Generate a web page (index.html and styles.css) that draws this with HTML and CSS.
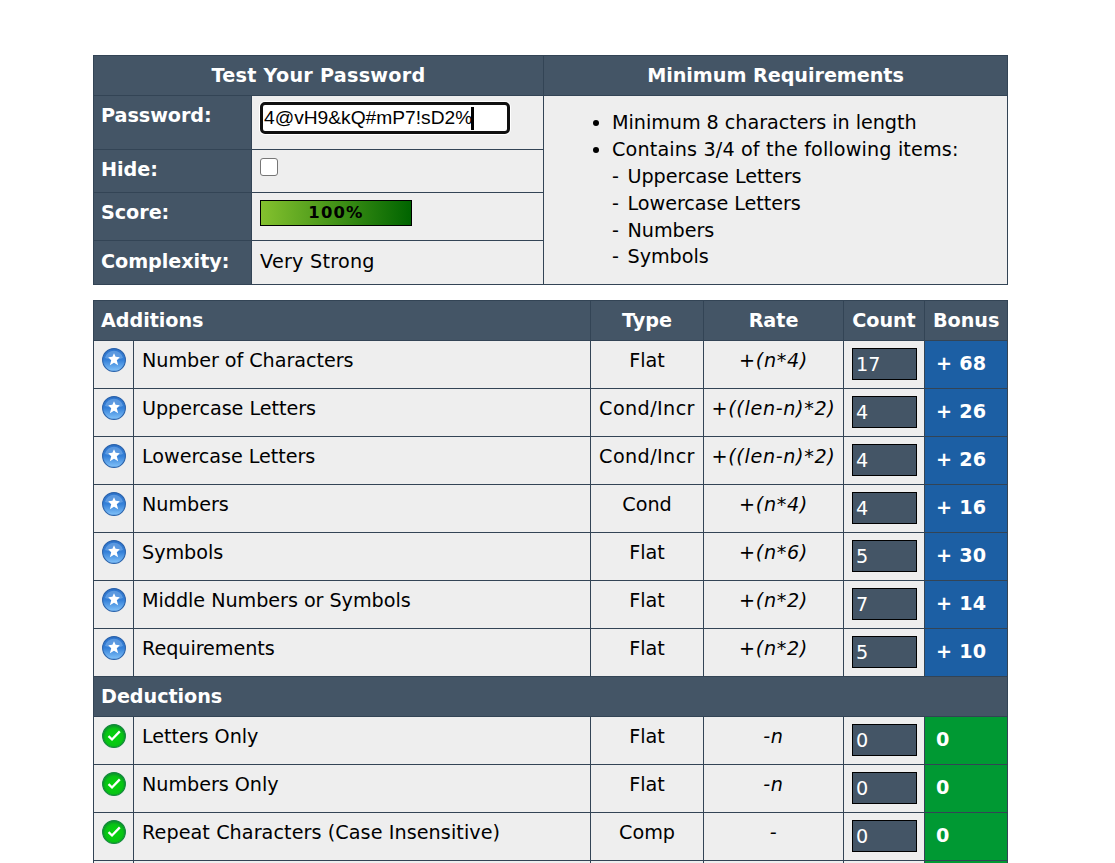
FILE: index.html
```
<!DOCTYPE html>
<html lang="en">
<head>
<meta charset="utf-8">
<title>Password Meter</title>
<link rel="stylesheet" href="styles.css">
</head>
<body>
<svg class="defs" width="0" height="0">
  <defs>
    <linearGradient id="blue" x1="0" y1="0" x2="0" y2="1"><stop offset="0" stop-color="#2e74cc"/><stop offset=".5" stop-color="#3480d8"/><stop offset="1" stop-color="#84c4fa"/></linearGradient>
    <radialGradient id="green" cx=".5" cy=".55" r=".5"><stop offset="0" stop-color="#04d60c"/><stop offset=".75" stop-color="#08c414"/><stop offset="1" stop-color="#0a9a28"/></radialGradient>
    <symbol id="star" viewBox="0 0 24 24">
      <circle cx="12" cy="12" r="11.4" fill="url(#blue)" stroke="#2a62aa" stroke-width="1.1"/>
      <path d="M3 10a9.2 9.2 0 0 1 18 0q-9 3-18 0z" fill="#9cc8f4" opacity=".4"/>
      <path d="M12 5.2l1.6 3.6 4.2.5-3 2.9 1.3 5-4.1-2.4-4.1 2.4 1.3-5-3-2.9 4.2-.5z" fill="#fff"/>
    </symbol>
    <symbol id="check" viewBox="0 0 24 24">
      <circle cx="12" cy="12" r="11.4" fill="url(#green)" stroke="#14883c" stroke-width="1.1"/>
      <path d="M6.5 12.2l3.5 3.3 7.8-8.1" fill="none" stroke="#fff" stroke-width="2.3"/>
    </symbol>
  </defs>
</svg>
<main class="page">
  <section class="test">
    <h2 class="head span2 wide">Test Your Password</h2>
    <h2 class="head">Minimum Requirements</h2>
    <label class="label">Password:</label>
    <div class="cell"><div class="field">4@vH9&amp;kQ#mP7!sD2%<span class="caret"></span></div></div>
    <div class="cell reqs">
      <ul>
        <li>Minimum 8 characters in length</li>
        <li><span class="loose">Contains 3/4 of the following items:</span><br><span class="dash">-</span>Uppercase Letters<br><span class="dash">-</span>Lowercase Letters<br><span class="dash">-</span>Numbers<br><span class="dash">-</span>Symbols</li>
      </ul>
    </div>
    <label class="label">Hide:</label>
    <div class="cell"><span class="box"></span></div>
    <label class="label">Score:</label>
    <div class="cell"><div class="score">100%</div></div>
    <label class="label low">Complexity:</label>
    <div class="cell low wide">Very Strong</div>
  </section>
  <section class="rules">
    <h2 class="head left span2">Additions</h2>
    <h2 class="head">Type</h2><h2 class="head">Rate</h2><h2 class="head">Count</h2><h2 class="head">Bonus</h2>

    <div class="cell pic"><svg class="icon"><use href="#star"/></svg></div><div class="cell">Number of Characters</div><div class="cell mid">Flat</div><div class="cell mid rate">+(n*4)</div><div class="cell pic"><div class="count">17</div></div><div class="bonus">+ 68</div>
    <div class="cell pic"><svg class="icon"><use href="#star"/></svg></div><div class="cell">Uppercase Letters</div><div class="cell mid incr">Cond/Incr</div><div class="cell mid rate">+((len-n)*2)</div><div class="cell pic"><div class="count">4</div></div><div class="bonus">+ 26</div>
    <div class="cell pic"><svg class="icon"><use href="#star"/></svg></div><div class="cell">Lowercase Letters</div><div class="cell mid incr">Cond/Incr</div><div class="cell mid rate">+((len-n)*2)</div><div class="cell pic"><div class="count">4</div></div><div class="bonus">+ 26</div>
    <div class="cell pic"><svg class="icon"><use href="#star"/></svg></div><div class="cell">Numbers</div><div class="cell mid">Cond</div><div class="cell mid rate">+(n*4)</div><div class="cell pic"><div class="count">4</div></div><div class="bonus">+ 16</div>
    <div class="cell pic"><svg class="icon"><use href="#star"/></svg></div><div class="cell">Symbols</div><div class="cell mid">Flat</div><div class="cell mid rate">+(n*6)</div><div class="cell pic"><div class="count">5</div></div><div class="bonus">+ 30</div>
    <div class="cell pic"><svg class="icon"><use href="#star"/></svg></div><div class="cell">Middle Numbers or Symbols</div><div class="cell mid">Flat</div><div class="cell mid rate">+(n*2)</div><div class="cell pic"><div class="count">7</div></div><div class="bonus">+ 14</div>
    <div class="cell pic"><svg class="icon"><use href="#star"/></svg></div><div class="cell">Requirements</div><div class="cell mid">Flat</div><div class="cell mid rate">+(n*2)</div><div class="cell pic"><div class="count">5</div></div><div class="bonus">+ 10</div>

    <h2 class="head left full">Deductions</h2>

    <div class="cell pic"><svg class="icon"><use href="#check"/></svg></div><div class="cell">Letters Only</div><div class="cell mid">Flat</div><div class="cell mid rate">-n</div><div class="cell pic"><div class="count">0</div></div><div class="bonus ok">0</div>
    <div class="cell pic"><svg class="icon"><use href="#check"/></svg></div><div class="cell">Numbers Only</div><div class="cell mid">Flat</div><div class="cell mid rate">-n</div><div class="cell pic"><div class="count">0</div></div><div class="bonus ok">0</div>
    <div class="cell pic"><svg class="icon"><use href="#check"/></svg></div><div class="cell loose">Repeat Characters (Case Insensitive)</div><div class="cell mid">Comp</div><div class="cell mid rate">-</div><div class="cell pic"><div class="count">0</div></div><div class="bonus ok">0</div>
    <div class="edge"></div><div class="edge"></div><div class="edge"></div><div class="edge"></div><div class="edge"></div><div class="edge ok"></div>
  </section>
</main>
</body>
</html>
```
FILE: styles.css
```
* { box-sizing: border-box; }
body {
  margin: 0;
  background: #fff;
  color: #000;
  font: 19.2px/24px Verdana, "DejaVu Sans", sans-serif;
  letter-spacing: -0.05px;
}
.defs { display: block; }
.page {
  width: 915px;
  margin-left: 93px;
  padding-top: 55px;
  display: flex;
  flex-direction: column;
  gap: 15px;
}
.test, .rules {
  display: grid;
  gap: 1px;
  padding: 1px;
  background: #345;
}
.test {
  grid-template-columns: 157px 291px 463px;
  grid-template-rows: 39px 53px 42px 47px 43px;
}
.rules {
  grid-template-columns: 39px 456px 112px 139px 80px 82px;
  grid-template-rows: 39px repeat(7, 47px) 39px repeat(3, 47px) 2px;
  padding-bottom: 0;
}
.head, .label {
  margin: 0;
  background: #456;
  color: #fff;
  font-size: 19.2px;
  font-weight: bold;
  padding: 8px 8px 7px;
  white-space: nowrap;
}
.label, .left { padding-left: 7px; }
.head { text-align: center; }
.head.left { text-align: left; }
.span2 { grid-column: span 2; }
.full { grid-column: 1 / -1; }
.cell {
  background: #eee;
  padding: 8px 8px 7px;
  white-space: nowrap;
  min-width: 0;
}
.test .cell, .pic { padding-top: 7px; }
.mid { text-align: center; padding-left: 0; padding-right: 0; }
.rate { font-style: italic; letter-spacing: 0.65px; }
.incr { letter-spacing: 0.4px; }
.wide { letter-spacing: 0.25px; }
.loose { letter-spacing: 0.07px; }
.reqs .loose { letter-spacing: 0.14px; }
.low, .test .low { padding-top: 9px; padding-bottom: 7px; }
.test .reqs {
  grid-column: 3;
  grid-row: 2 / 6;
  padding: 14px 8px 10px;
  line-height: 26.88px;
}
.reqs ul { margin: 0; padding-left: 60px; }
.dash { display: inline-block; width: 15.5px; }
.field {
  display: flex;
  align-items: center;
  width: 250px;
  height: 32px;
  margin-top: -1px;
  padding-left: 1px;
  background: #fff;
  border: 3px solid #101010;
  border-radius: 5px;
  box-shadow: 0 0 0 1px #fff;
  font-family: "Liberation Sans", Arial, sans-serif;
  letter-spacing: 0;
}
.caret { width: 1px; height: 21px; background: #000; outline: 0.5px solid #000; }
.box {
  display: block;
  width: 18px;
  height: 18px;
  margin-top: 1px;
  background: #fff;
  border: 1px solid #767676;
  border-radius: 3px;
}
.score {
  width: 152px;
  height: 26px;
  border: 1px solid #000;
  background: linear-gradient(90deg, #84c12e, #006400);
  font-size: 16.4px;
  font-weight: bold;
  letter-spacing: 1.2px;
  text-align: center;
}
.icon { display: block; width: 24px; height: 24px; }
.count {
  width: 65px;
  height: 32px;
  padding: 4px 3px 2px;
  border: 1px solid #000;
  background: #456;
  color: #fff;
}
.bonus {
  background: #1c5fa4;
  color: #fff;
  font-weight: bold;
  letter-spacing: 0.2px;
  padding: 11px 11px;
  white-space: nowrap;
}
.edge { background: #eee; }
.ok { background: #093; }
```
